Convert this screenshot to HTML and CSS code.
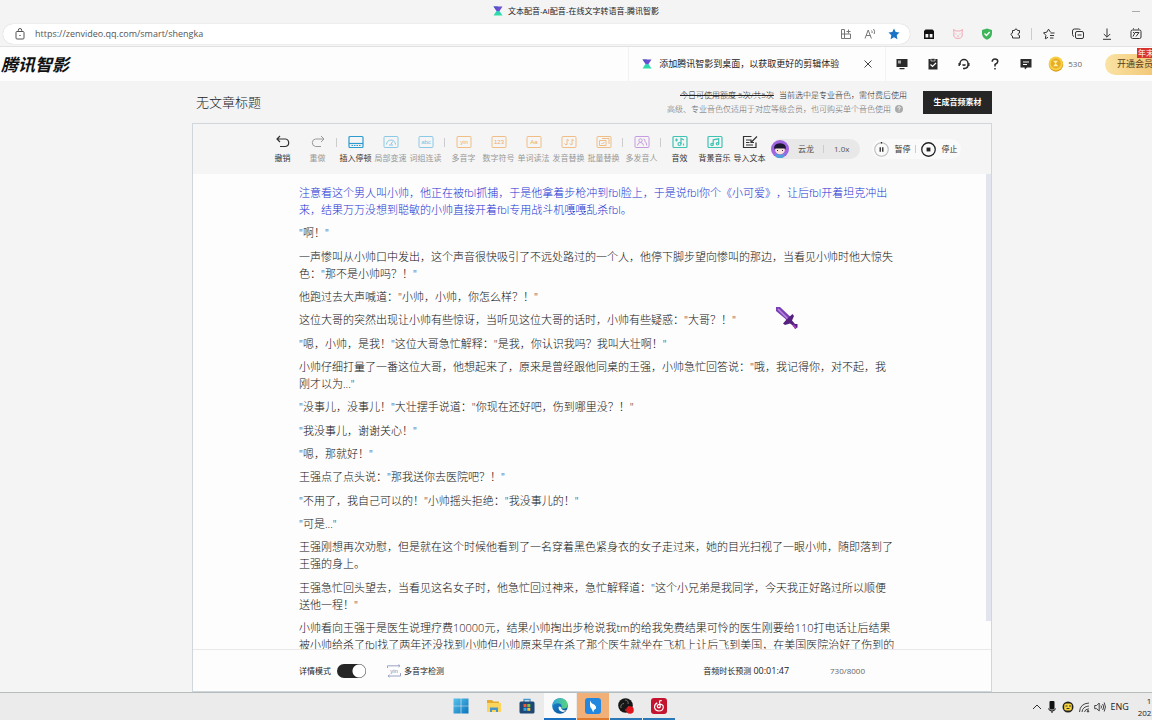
FILE: index.html
```html
<!DOCTYPE html>
<html lang="zh-CN">
<head>
<meta charset="utf-8">
<title>文本配音-AI配音-在线文字转语音-腾讯智影</title>
<link rel="stylesheet" href="styles.css">
</head>
<body>
<svg class="defs" aria-hidden="true">
  <defs>
    <linearGradient id="zg" x1="0" y1="0" x2="0" y2="1"><stop offset="0" stop-color="#31c9c4"/><stop offset="1" stop-color="#2fe3a0"/></linearGradient>
    <linearGradient id="winb" x1="0" y1="0" x2="1" y2="1"><stop offset="0" stop-color="#58c4ec"/><stop offset="1" stop-color="#0a73bd"/></linearGradient>
    <linearGradient id="edgeb" x1="0" y1="0" x2="1" y2="1"><stop offset="0" stop-color="#1a8fd6"/><stop offset="1" stop-color="#0b4a91"/></linearGradient>
    <linearGradient id="edgeg" x1="0" y1="0" x2="1" y2="0"><stop offset="0" stop-color="#2ba6e0"/><stop offset="1" stop-color="#5bd576"/></linearGradient>
    <symbol id="zen" viewBox="0 0 10 10"><path d="M.5 .5h9L6.500 5h-3z" fill="#6a4fd0"/><path d="M.5 .5h4.500l-2 3z" fill="#4b56c8"/><path d="M3.500 5h3l3 4.500h-9z" fill="url(#zg)"/></symbol>
  </defs>
</svg>

<div class="tabbar">
  <svg class="i10" viewBox="0 0 10 10"><use href="#zen"/></svg>
  <span>文本配音-AI配音-在线文字转语音-腾讯智影</span>
  <button class="minimize" aria-label="最小化"></button>
</div>

<div class="navbar">
  <div class="address">
    <svg class="i12" viewBox="0 0 12 12" fill="none" stroke="#555"><rect x="2" y="3.500" width="8" height="7.500" rx="1"/><path d="M4.300 3.500V2.200a1.700 1.700 0 0 1 3.400 0v1.300M5.300 7.500h1.400"/></svg>
    <input class="url" aria-label="地址" value="https://zenvideo.qq.com/smart/shengka">
    <button class="nb" aria-label="应用"><svg class="i12" viewBox="0 0 12 12" fill="none" stroke="#777"><path d="M1.500 1.500h3v9h-3zM1.500 6h9v4.500h-6M6.500 3.500h4M8.500 1.500v4"/></svg></button>
    <button class="nb" aria-label="朗读"><svg class="i12" viewBox="0 0 12 12" fill="none" stroke="#777"><path d="M1 10.500 4.200 2l3.200 8.500M2 7.500h4.500M7.500 2.500q1 1 .5 2.500M9.500 1q1.800 2.200.7 5"/></svg></button>
    <button class="nb" aria-label="收藏"><svg class="i12" viewBox="0 0 12 12"><path d="M6 .6l1.700 3.500 3.800.5-2.800 2.700.7 3.900L6 9.300l-3.400 1.900.7-3.900L.5 4.600l3.800-.5z" fill="#1a73c4"/></svg></button>
  </div>
  <div class="extensions">
    <button class="ext" aria-label="扩展"><svg class="i12" viewBox="0 0 12 12"><path d="M2.500 1.500h7l1.500 1.500v8H1V3z" fill="#111"/><path d="M2.500 6h2.800v3.500H2.500zM6.700 6h2.800v3.500H6.700z" fill="#f4f4f4"/></svg></button>
    <button class="ext" aria-label="小猫"><svg class="i12" viewBox="0 0 12 12" fill="none" stroke="#f2a7b3"><path d="M2 4.500 1.500 1.500 4 3h4l2.500-1.500L10 4.500q1.500 5.800-4 6-5.500-.2-4-6zM3.500 6h1M7.500 6h1M5 8h2"/></svg></button>
    <button class="ext" aria-label="安全"><svg class="i12" viewBox="0 0 12 12"><path d="M6 .5 11 2v4q-.5 4-5 5.700Q1.500 10 1 6V2z" fill="#3fb65b"/><path d="m3.500 5.500 2 2 3.200-3.500" fill="none" stroke="#fff" stroke-width="1.400"/></svg></button>
    <button class="ext" aria-label="插件"><svg class="i12" viewBox="0 0 12 12" fill="none" stroke="#333"><path d="M2.500 2.500h2q.2-1.500 1.500-1.500t1.500 1.500h2v2.500q-1.500 0-1.500 1.200t1.500 1.300v2.500h-7V8Q1 7.500 1 6.300T2.500 5z"/></svg></button>
    <i class="bar"></i>
    <button class="ext" aria-label="收藏夹"><svg class="i12" viewBox="0 0 12 12" fill="none" stroke="#333"><path d="m7.500 4.200-2-3-1.700 3-3.300.6 2.400 2.500-.6 3.500 2.700-1.500M7.500 5h4M7 7.500h4M7 10h3.500"/></svg></button>
    <button class="ext" aria-label="集锦"><svg class="i12" viewBox="0 0 12 12" fill="none" stroke="#333"><rect x="3.500" y="3.500" width="8" height="7" rx="1.500"/><path d="M2 8.500Q.5 8 .5 6.500V3Q.5 1 2.500 1h4Q8 1 8.500 2M5.500 7h4"/></svg></button>
    <button class="ext" aria-label="下载"><svg class="i12" viewBox="0 0 12 12" fill="none" stroke="#333"><path d="M6 .5v8.500M2.800 6 6 9.200 9.200 6M2 11.300h8"/></svg></button>
    <button class="ext" aria-label="性能"><svg class="i12" viewBox="0 0 12 12" fill="none" stroke="#333"><rect x="1" y="2" width="10" height="8.500" rx="1.500"/><path d="M3 8.500 5 4.500h4M6 8.500l3-4M3 .8h1M8 .8h1M3 4.500h1"/></svg></button>
  </div>
</div>

<header class="site">
  <a class="brand" href="#">腾讯智影</a>
  <div class="promo">
    <svg class="i10" viewBox="0 0 10 10"><use href="#zen"/></svg>
    <span>添加腾讯智影到桌面，以获取更好的剪辑体验</span>
    <button class="close" aria-label="关闭"><svg class="i10" viewBox="0 0 10 10" fill="none" stroke="#444"><path d="m1.500 1.500 7 7M8.500 1.500l-7 7"/></svg></button>
  </div>
  <nav class="tools">
    <button aria-label="桌面"><svg class="i12" viewBox="0 0 12 12"><path d="M.5 1h11v8H.5zM3.500 10h5v1.200h-5z" fill="#2b2b2b"/><path d="M2 2.500h3v3H2z" fill="#aaa"/></svg></button>
    <button aria-label="任务"><svg class="i12" viewBox="0 0 12 12"><path d="M1.500 1h9v10.500h-9z" fill="#2b2b2b"/><path d="M4 .5h4V3H4z" fill="#2b2b2b" stroke="#fff" stroke-width=".6"/><path d="m3.500 6.500 2 2 3.500-3.500" fill="none" stroke="#fff" stroke-width="1.200"/></svg></button>
    <button aria-label="客服"><svg class="i12" viewBox="0 0 12 12" fill="none" stroke="#2b2b2b" stroke-width="1.500"><path d="M2 7V5.500a4 4 0 0 1 8 0V7q0 3-3.500 3.500"/><path d="M1.200 5v3M10.800 5v3M5 10.500h2M4.500 6.500q1.500 1.500 3 0"/></svg></button>
    <button aria-label="帮助"><svg class="i12" viewBox="0 0 12 12" fill="none" stroke="#2b2b2b" stroke-width="1.500"><path d="M3.200 3.800Q3.300 1 6 1t2.800 2.500Q8.800 5 6 6.500v2M6 10v1.600"/></svg></button>
    <button aria-label="消息"><svg class="i12" viewBox="0 0 12 12"><path d="M.5 1h11v8.500H7L5 11.500 4.500 9.500h-4z" fill="#2b2b2b"/><path d="M3 4h6M3 6.500h4" stroke="#fff"/></svg></button>
  </nav>
  <div class="coins">
    <svg class="i16" viewBox="0 0 16 16"><circle cx="8" cy="8.500" r="7.200" fill="#d89a19"/><circle cx="7.800" cy="7.500" r="7" fill="#f7cf45"/><circle cx="7.800" cy="7.500" r="5" fill="#e8ad25"/><path d="M5 4.800h5L7.800 7.500l2.500 2.800H5.200l2.200-2.800z" fill="#fff0a8"/></svg>
    <span>530</span>
  </div>
  <button class="vip">开通会员<span class="flag">年末</span></button>
</header>

<main class="work">
  <div class="head">
    <input class="title" aria-label="标题" value="无文章标题">
    <div class="quota">
      <p><s>今日可使用额度 5次/共5次</s> <span>当前选中是专业音色，需付费后使用</span></p>
      <p class="dim">高级、专业音色仅适用于对应等级会员，也可购买单个音色使用 <svg class="i8" viewBox="0 0 8 8"><circle cx="4" cy="4" r="4" fill="#aaa"/><path d="M2.800 3q.1-1.300 1.300-1.300 1.300.1 1.200 1.200Q5.200 3.500 4 4.200v.6M4 5.600v.9" fill="none" stroke="#fff" stroke-width=".8"/></svg></p>
    </div>
    <button class="generate">生成音频素材</button>
  </div>

  <section class="editor">
    <div class="toolbar">
      <button class="tb on"><svg viewBox="0 0 16 14" fill="none" stroke="#333" stroke-width="1.200"><path d="M5 1 2 4l3 3M2 4h8.500a3.800 3.800 0 0 1 0 7.500H5"/></svg>撤销</button>
      <button class="tb"><svg viewBox="0 0 16 14" fill="none" stroke="#999"><path d="m11 1 3 3-3 3M14 4H5.500a3.800 3.800 0 0 0 0 7.500H11"/></svg>重做</button>
      <i class="sep"></i>
      <button class="tb on"><svg viewBox="0 0 16 14" fill="none" stroke="#2b9bd0" stroke-width="1.200"><rect x="1" y="1.500" width="14" height="11" rx="1"/><path d="M1 8.500h14" /><path d="M3.500 10.500h9" stroke-dasharray="1.500 1"/></svg>插入停顿</button>
      <button class="tb"><svg viewBox="0 0 16 14" fill="none" stroke="#8cc9e6"><rect x="1" y="1.500" width="14" height="11" rx="1"/><path d="M3.500 9.500a4.500 4.500 0 0 1 9 0M8 9.500l1.500-3M6 10h4"/></svg>局部变速</button>
      <button class="tb"><svg viewBox="0 0 16 14" fill="none" stroke="#8cc9e6"><rect x="1" y="1.500" width="14" height="11" rx="1"/><text x="8" y="9" class="glyph blue">abc</text></svg>词组连读</button>
      <i class="sep"></i>
      <button class="tb"><svg viewBox="0 0 16 14" fill="none" stroke="#f0bd85"><rect x="1" y="1.500" width="14" height="11" rx="1"/><text x="8" y="9" class="glyph orange">yin</text></svg>多音字</button>
      <button class="tb"><svg viewBox="0 0 16 14" fill="none" stroke="#f0bd85"><rect x="1" y="1.500" width="14" height="11" rx="1"/><text x="8" y="9" class="glyph orange">123</text></svg>数字符号</button>
      <button class="tb"><svg viewBox="0 0 16 14" fill="none" stroke="#f0bd85"><rect x="1" y="1.500" width="14" height="11" rx="1"/><text x="8" y="9" class="glyph orange">Aa</text></svg>单词读法</button>
      <button class="tb"><svg viewBox="0 0 16 14" fill="none" stroke="#f0bd85"><rect x="1" y="1.500" width="14" height="11" rx="1"/><path d="M4 9.500h2v-5l2 1M9.500 9.500h1.500v-5l2 1M3.500 8.500l1 1M9 8.500l1 1"/></svg>发音替换</button>
      <button class="tb"><svg viewBox="0 0 16 14" fill="none" stroke="#f0bd85"><rect x="1" y="1.500" width="14" height="11" rx="1"/><path d="M6 3.500h7v5.500M3.500 5.500H10v5H3.500zM5.500 8l1 1 2-2"/></svg>批量替换</button>
      <i class="sep"></i>
      <button class="tb"><svg viewBox="0 0 16 14" fill="none" stroke="#c79be0"><rect x="1" y="1.500" width="14" height="11" rx="1"/><circle cx="6.500" cy="5.500" r="1.700"/><path d="M3.500 10.500q.3-3 3-3t3 3M9.500 4q2 .2 1.500 2.500 1.700 1 1.700 4"/></svg>多发音人</button>
      <i class="sep"></i>
      <button class="tb on"><svg viewBox="0 0 16 14" fill="none" stroke="#3fc4b4" stroke-width="1.200"><rect x="1" y="1.500" width="14" height="11" rx="1"/><circle cx="7.500" cy="9" r="1.500"/><path d="M9 9V3.500l3 1.500M3 5h3M4.500 3.500v3M11.500 8.500v2"/></svg>音效</button>
      <button class="tb on"><svg viewBox="0 0 16 14" fill="none" stroke="#3fc4b4" stroke-width="1.200"><rect x="1" y="1.500" width="14" height="11" rx="1"/><circle cx="5" cy="9.500" r="1.200"/><circle cx="10.500" cy="8.800" r="1.200"/><path d="M6.200 9.500V4.800l5.500-1v5"/></svg>背景音乐</button>
      <button class="tb on"><svg viewBox="0 0 16 14" fill="none" stroke="#333" stroke-width="1.200"><path d="M9.500 1.500h-8v11h12.500V7.500M4 5h4.500M4 7.500h3.500M4 10h7M15 1.500 9.500 7M9 4.500V7.500h3"/></svg>导入文本</button>
      <div class="voice">
        <svg class="avatar" viewBox="0 0 18 18"><circle cx="9" cy="9" r="9" fill="#a064e0"/><path d="M4 13q5 4 10 0l-1.500 4.300q-3.500 1.500-7 0z" fill="#4aa4d8"/><ellipse cx="9" cy="10" rx="4.800" ry="4.300" fill="#fbe3d8"/><path d="M3.300 9.500Q2 3.500 9 3.200q7 .3 5.700 6.300l-1-1H4.500z" fill="#1c1733"/><path d="M6.500 10v1M11.500 10v1" stroke="#312242"/></svg>
        <button>云龙</button><i></i><button>1.0x</button>
      </div>
      <div class="playback">
        <button><svg class="i14" viewBox="0 0 14 14" fill="none"><circle cx="7" cy="7" r="6.300" stroke="#bbb"/><path d="M5.800 5v4M8.200 5v4M7 0v1.500" stroke="#222" stroke-width="1.200"/></svg>暂停</button><i></i>
        <button><svg class="i14" viewBox="0 0 14 14" fill="none"><circle cx="7" cy="7" r="6.300" stroke="#222" stroke-width="1.200"/><path d="M5.200 5.200h3.600v3.600H5.200z" fill="#222"/></svg>停止</button>
      </div>
    </div>

    <div class="scroll">
      <article class="script">
        <p class="playing">注意看这个男人叫小帅，他正在被fbl抓捕，于是他拿着步枪冲到fbl脸上，于是说fbl你个《小可爱》，让后fbl开着坦克冲出来，结果万万没想到聪敏的小帅直接开着fbl专用战斗机嘎嘎乱杀fbl。</p>
        <p>"啊！"</p>
        <p>一声惨叫从小帅口中发出，这个声音很快吸引了不远处路过的一个人，他停下脚步望向惨叫的那边，当看见小帅时他大惊失色："那不是小帅吗？！"</p>
        <p>他跑过去大声喊道："小帅，小帅，你怎么样？！"</p>
        <p>这位大哥的突然出现让小帅有些惊讶，当听见这位大哥的话时，小帅有些疑惑："大哥？！"</p>
        <p>"嗯，小帅，是我！"这位大哥急忙解释："是我，你认识我吗？我叫大壮啊！"</p>
        <p>小帅仔细打量了一番这位大哥，他想起来了，原来是曾经跟他同桌的王强，小帅急忙回答说："哦，我记得你，对不起，我刚才以为..."</p>
        <p>"没事儿，没事儿！"大壮摆手说道："你现在还好吧，伤到哪里没？！"</p>
        <p>"我没事儿，谢谢关心！"</p>
        <p>"嗯，那就好！"</p>
        <p>王强点了点头说："那我送你去医院吧？！"</p>
        <p>"不用了，我自己可以的！"小帅摇头拒绝："我没事儿的！"</p>
        <p>"可是..."</p>
        <p>王强刚想再次劝慰，但是就在这个时候他看到了一名穿着黑色紧身衣的女子走过来，她的目光扫视了一眼小帅，随即落到了王强的身上。</p>
        <p>王强急忙回头望去，当看见这名女子时，他急忙回过神来，急忙解释道："这个小兄弟是我同学，今天我正好路过所以顺便送他一程！"</p>
        <p>小帅看向王强于是医生说理疗费10000元，结果小帅掏出步枪说我tm的给我免费结果可怜的医生刚要给110打电话让后结果被小帅给杀了fbl找了两年还没找到小帅但小帅原来早在杀了那个医生就坐在飞机上让后飞到美国，在美国医院治好了伤到的</p>
      </article>
      <i class="thumb"></i>
    </div>

    <div class="status">
      <label class="mode">详情模式 <input type="checkbox" checked></label>
      <button class="check"><svg viewBox="0 0 16 14" fill="none" stroke="#9aa3c4"><path d="M1.500 4V1.800H14M14.500 9v3H2M12.500.5 14 1.800 12.500 3M3.500 10.800 2 12l1.500 1.200"/><text x="8" y="9" class="glyph slate">yin</text></svg>多音字检测</button>
      <span class="duration">音频时长预测 <b>00:01:47</b></span>
      <span class="count">730/8000</span>
    </div>
  </section>
</main>

<svg class="cursor" viewBox="0 0 22 22"><path d="M0 0h4l9 8.500 2.500 2-4 4-2.500-3L0 4z" fill="#7a3fb0"/><path d="M2 2l10 10" stroke="#b98ae0" stroke-width="1.600"/><path d="m16.500 7 1.500 2-2 4.500 3 3.500h2.500v3.500L19 22l-1.500-3-3.500-2.500L9 18l-2-1.500 4-4.500z" fill="#57217f"/><path d="m17 18 3 3" stroke="#a63cc0" stroke-width="2"/></svg>

<footer class="taskbar">
  <span></span>
  <div class="apps">
    <button aria-label="开始"><svg class="i16" viewBox="0 0 16 16" fill="url(#winb)"><path d="M.5.5h7.200v7.200H.5zM8.300.5h7.200v7.200H8.300zM.5 8.300h7.200v7.200H.5zM8.300 8.300h7.200v7.200H8.300z"/></svg></button>
    <button aria-label="文件资源管理器"><svg class="i16" viewBox="0 0 16 16"><path d="M1 2h5l1.500 1.500H13V14H1z" fill="#e6aa30"/><path d="M1 5h14v9H1z" fill="#fbd55c"/><path d="M4 9.500h8V14h-2v-2H6v2H4z" fill="#4a95c8"/></svg></button>
    <button aria-label="应用商店"><svg class="i16" viewBox="0 0 16 16"><path d="M5 4V1.500h6V4" fill="none" stroke="#4597cf" stroke-width="1.300"/><rect x=".5" y="3.500" width="15" height="12" rx="1.500" fill="#1d4775"/><path d="M4.500 6h3v3h-3z" fill="#f05a3c"/><path d="M8.300 6h3v3h-3z" fill="#7cc243"/><path d="M4.500 9.800h3v3h-3z" fill="#36a9e0"/><path d="M8.300 9.800h3v3h-3z" fill="#fbc02d"/></svg></button>
    <button class="current" aria-label="Edge"><svg class="i16" viewBox="0 0 16 16"><circle cx="8" cy="8" r="7.800" fill="url(#edgeb)"/><path d="M.3 7.500Q1.500.2 8.200.2q7.300.5 7.500 6.800-.3 3.600-4 3.800-2.700 0-2.400-1.300Q10.200 8 9 6.300 5 3.500.3 7.500z" fill="url(#edgeg)"/><path d="M9.200 9.500Q7 7.500 6.500 9.500q0 3.500 4 4.500 2.500 0 4-1.800-2 .8-4-.5-1.500-1-1.300-2.200z" fill="#eef7fb"/></svg></button>
    <button class="alert" aria-label="Bird"><svg class="i16" viewBox="0 0 16 16"><rect width="16" height="16" rx="3" fill="#2387e0"/><path d="M5 2.500q1 2.500 3 3.500 3.500 1.500 3 4.500l-2 1.500-.8 2.500-1.200-3Q4.500 9.500 5 6.500z" fill="#fff"/></svg></button>
    <button class="running" aria-label="录屏"><svg class="i16" viewBox="0 0 16 16"><circle cx="7.500" cy="7.500" r="7.300" fill="#161616"/><path d="M7 2q4 .5 3 4M3 10q-1-4 3-4.500M7 12q3.500.5 4-4" stroke="#777" fill="none"/><circle cx="12" cy="12" r="3.800" fill="#e0141b"/></svg></button>
    <button class="running" aria-label="音乐"><svg class="i16" viewBox="0 0 16 16"><rect width="16" height="16" rx="3" fill="#c3132e"/><path d="M10.800 2.800q-2.500-.8-2.300 1.500l.8 4q0 1.600-1.400 1.600T6.300 8.400q0-1.700 2.700-2.200 3.500.3 3.300 3.300-.5 3.500-4.300 3.500T3.500 9.200q0-3 2.800-4.300" fill="none" stroke="#fff" stroke-width="1.200"/></svg></button>
  </div>
  <div class="tray">
    <svg class="i10" viewBox="0 0 10 10" fill="none" stroke="#333"><path d="m1 7 4-4 4 4"/></svg>
    <svg class="i12" viewBox="0 0 12 12"><rect x="3.500" width="5" height="8.500" rx="1" fill="#111"/><path d="M2.500 7.500Q3 10 6 10t3.500-2.500M6 10v2" fill="none" stroke="#111"/></svg>
    <svg class="i12" viewBox="0 0 12 12"><circle cx="6" cy="6" r="5.500" fill="#222"/><rect x="2.200" y="2.500" width="7.600" height="7" rx="2" fill="#f7d33e"/><path d="M3.500 5h2M7 5h2M4.500 7.500h3" stroke="#333"/></svg>
    <svg class="i12" viewBox="0 0 12 12" fill="none" stroke="#444"><path d="M1.500 11Q2 2.500 11 2M4 11q.5-5.500 7-6M6.500 11Q7 8 11 7.800"/><circle cx="10" cy="10.300" r=".8" fill="#333"/></svg>
    <svg class="i12" viewBox="0 0 12 12" fill="none" stroke="#444"><path d="M.7 4.500h2L5.200 2v8L2.700 7.700h-2zM7 4.500q1 1.500 0 3M8.700 3q2 3 0 6M10.200 1.500q2.500 4.500 0 9"/></svg>
    <span class="lang">ENG</span>
    <span class="clock">11<br>2022</span>
  </div>
</footer>
</body>
</html>
```

FILE: styles.css
```css
* { box-sizing: border-box; }

body {
  margin: 0;
  height: 100vh;
  display: flex;
  flex-direction: column;
  overflow: hidden;
  background: #f4f4f5;
  color: #222;
  font: 300 8px/12px "Open Sans", "Noto Sans CJK SC", sans-serif;
}

p { margin: 0; }
svg { flex: none; display: block; }
button {
  border: 0;
  padding: 0;
  background: none;
  font: inherit;
  color: inherit;
  white-space: nowrap;
  display: flex;
  align-items: center;
  justify-content: center;
}
input { font: inherit; color: inherit; border: 0; padding: 0; background: none; min-width: 0; outline: 0; }

.defs { position: absolute; width: 0; height: 0; }
.i8 { width: 8px; height: 8px; }
.i10 { width: 10px; height: 10px; }
.i12 { width: 12px; height: 12px; }
.i14 { width: 15px; height: 15px; }
.i16 { width: 16px; height: 16px; }

/* browser frame */
.tabbar {
  position: relative;
  flex: none;
  height: 23px;
  display: flex;
  align-items: center;
  justify-content: center;
  gap: 5px;
  padding-bottom: 2px;
  font-weight: 400;
}
.minimize { position: absolute; right: 12px; top: 11px; width: 8px; height: 1px; background: #aaa; }

.navbar { flex: none; height: 24px; display: flex; padding: 1px 0 2px 3px; border-bottom: 1px solid #e2e2e2; }
.address {
  flex: 1;
  display: flex;
  align-items: center;
  padding: 0 4px 0 11px;
  border-radius: 11px;
  background: #fff;
  box-shadow: 0 0 1px #bbb;
}
.url { flex: 1; margin-left: 9px; font-size: 9px; font-weight: 400; color: #555; }
.nb { width: 24px; }
.extensions { flex: none; display: flex; align-items: center; margin: 0 2px 0 4px; }
.ext { width: 29px; height: 20px; }
.bar { width: 1px; height: 12px; margin: 0 2px 0 1px; background: #ccc; }

/* site header */
.site { flex: none; height: 34px; display: flex; align-items: center; background: #fdfdfd; }
.brand { margin-left: 1px; flex: 1; font: italic 700 17px/24px "Noto Sans CJK SC", sans-serif; color: #111; text-decoration: none; }
.promo {
  display: flex;
  align-items: center;
  align-self: stretch;
  gap: 7px;
  padding: 0 12px 0 13px;
  border: solid #f2f2f2;
  border-width: 0 1px;
  font-size: 9px;
  font-weight: 400;
}
.close { margin-left: 12px; }
.tools { display: flex; }
.tools button { width: 31px; height: 24px; }
.coins { display: flex; align-items: center; gap: 4px; margin-left: 7px; color: #666; font-weight: 400; }
.vip {
  position: relative;
  height: 21px;
  margin: 0 -19px 0 23px;
  padding: 0 18px 0 12px;
  border-radius: 11px 0 0 11px;
  background: linear-gradient(90deg, #fae3a4, #efbd66);
  font-size: 9px;
  font-weight: 400;
  color: #5a3a12;
}
.promo .close { margin-left: 17px; }
.flag { position: absolute; left: 32px; top: -6px; padding: 0 3px 0 1px; font-size: 8px; line-height: 10px; color: #fff; background: #d8322f; }

/* workspace */
.work { flex: 1; min-height: 0; display: flex; flex-direction: column; margin: 0 160px 0 192px; }
.head { flex: none; height: 42px; display: flex; align-items: center; }
.title { flex: 1; margin-left: 4px; font-size: 13px; line-height: 20px; }
.quota { text-align: right; line-height: 14px; }
.quota span { margin-left: 3px; }
.dim { display: flex; align-items: center; justify-content: flex-end; gap: 4px; color: #666; }
.dim svg { margin-right: 4px; }
.generate { width: 69px; height: 23px; margin-left: 16px; background: #262626; color: #fff; font-weight: 700; }

.editor {
  flex: 1;
  min-height: 0;
  display: flex;
  flex-direction: column;
  border: 1px solid #cfd6dc;
  background: #fdfdfd;
}
.toolbar { flex: none; height: 50px; display: flex; align-items: center; padding-left: 72px; background: #f5f5f5; }
.tb { flex: none; width: 35px; flex-direction: column; gap: 3px; color: #999; font-weight: 400; }
.tb svg { width: 16px; height: 14px; }
.tb.on { color: #333; }
.sep { width: 1px; height: 9px; margin: 0 1px 14px; background: #ccc; flex: none; }
.glyph { font: 400 6px "Liberation Sans", sans-serif; text-anchor: middle; stroke: none; }
.blue { fill: #7cc0e2; }
.orange { fill: #eeaa62; }
.slate { fill: #7f8ab5; }

.voice { display: flex; align-items: center; height: 20px; margin-left: 4px; padding-right: 11px; border-radius: 10px; background: #e8e8e8; color: #555; font-weight: 400; }
.voice i, .playback i { width: 1px; height: 8px; background: #ccc; }
.avatar { width: 18px; height: 18px; margin-right: 9px; }
.voice i { margin: 0 10px 0 9px; }
.playback { display: flex; align-items: center; height: 20px; margin-left: 12px; padding: 0 4px 0 2px; border-radius: 10px; background: #fafafa; color: #333; font-weight: 400; }
.playback button { gap: 5px; }
.playback i { margin: 0 5px; }

.scroll { position: relative; flex: 1; min-height: 0; overflow: hidden; display: flex; flex-direction: column; }
.script {
  flex: 1;
  display: flex;
  flex-direction: column;
  justify-content: space-between;
  margin-bottom: -4px;
  padding: 10px 96px 0 106px;
  color: #111;
  font-size: 11px;
  line-height: 17px;
  text-spacing-trim: space-all;
}
.playing { color: #2232d2; }
.thumb { position: absolute; right: 0; top: 0; width: 5px; height: 94%; background: #e2e5ee; }

.status { flex: none; height: 42px; display: flex; align-items: center; padding: 1px 126px 0 106px; border-top: 1px solid #e8e8e8; font-weight: 400; }
.mode { display: flex; align-items: center; gap: 6px; }
.mode input {
  appearance: none;
  width: 29px;
  height: 14px;
  margin: 0;
  border-radius: 7px;
  background: radial-gradient(circle at 22px 7px, #fff 6px, #262626 7px);
}
.check { gap: 2px; margin-left: 20px; }
.check svg { width: 16px; height: 14px; }
.duration { margin-left: auto; }
.duration b { font-size: 9px; font-weight: 400; }
.count { margin-left: 41px; color: #666; }

.cursor { position: absolute; left: 776px; top: 307px; width: 22px; height: 22px; }

/* desktop taskbar */
.taskbar { flex: none; height: 28px; display: grid; grid-template-columns: 1fr auto 1fr; border-top: 1px solid #b5bcbc; background: #ebebeb; }
.apps { display: flex; gap: 1px; margin-right: 32px; }
.apps button { width: 32px; border-bottom: 2px solid transparent; }
.apps .current { background: #fafafa; border-color: #1a6fc0; }
.apps .alert { background: #f0b078; border-color: #e07b2e; }
.apps .running { border-color: #2a78b8; }
.tray { display: flex; align-items: center; justify-content: flex-end; gap: 4px; margin-right: -4px; font-weight: 400; color: #222; }
.lang { font-size: 9px; }
.clock { text-align: right; margin-left: 5px; }
```
